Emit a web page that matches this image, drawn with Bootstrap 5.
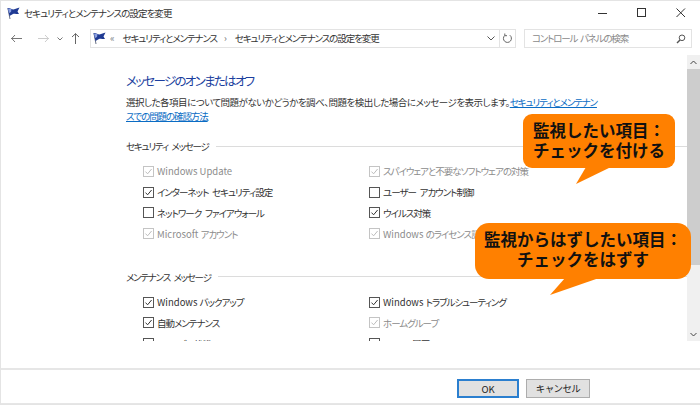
<!DOCTYPE html>
<html lang="ja">
<head>
<meta charset="utf-8">
<title>セキュリティとメンテナンスの設定を変更</title>
<link href="https://cdn.jsdelivr.net/npm/bootstrap@5.3.0/dist/css/bootstrap.min.css" rel="stylesheet">
<style>
html,body{height:100%;margin:0;overflow:hidden;background:#fff}
body{font-family:"Noto Sans CJK JP","Noto Sans",sans-serif;color:#333;font-size:9.5px;font-feature-settings:"palt"}
.win{height:405px;width:700px;border:1px solid #e4e4e4;border-right:0;position:relative}
.titlebar{height:24px;padding-left:5px;gap:4px;font-size:9.5px;letter-spacing:-.9px;color:#333}
.capbtns{margin-left:auto}
.capbtn{width:39px;height:24px}
.addr-row{height:22px;margin-top:3px;padding-right:7px}
.navbtns{width:89px;padding-left:10px}
.addrbox{width:426px;height:19px;border:1px solid #e3e3e3;font-size:9.5px;padding-left:1px;letter-spacing:-1.1px}
.addrbox .sep{margin:0 9px 0 7px;color:#666}
.refresh{width:16px;height:100%;border-left:1px solid #e3e3e3}
.searchbox{width:168px;height:19px;border:1px solid #e3e3e3;margin-left:8px;color:#8a8a8a;padding:0 5px 0 7px;letter-spacing:-1.2px;word-spacing:2px}
.pane{height:286px;margin-top:6px}
.scroller{flex:1 1 auto;overflow:hidden;padding:16px 0 0 125px;min-width:0}
.msg-head{font-size:12.5px;font-weight:400;color:#1c3f9e;margin:0;line-height:20px;letter-spacing:-1.7px}
.msg-body{font-size:9.5px;line-height:14px;margin:4px 0 0;white-space:nowrap;color:#333;letter-spacing:-.5px}
.msg-body a{color:#0a6cc4;text-decoration:underline;letter-spacing:-1.1px}
.sec-head{gap:7px;font-size:9.5px;line-height:14px;letter-spacing:-1.2px;word-spacing:2.5px}
.sec-head::after{content:"";flex:1 1 auto;height:1px;background:#dcdcdc}
.sec-one{margin-top:16px;margin-bottom:8px}
.sec-two{margin-top:26px;margin-bottom:8px}
.opt-grid{padding-left:17px;display:grid;grid-template-columns:226px 1fr;grid-auto-rows:20.7px}
.opt{gap:3px;font-size:9.5px;line-height:14px;white-space:nowrap;letter-spacing:-1px;word-spacing:2.5px}
.opt.off{color:#8c8c8c}
.lat{letter-spacing:0;word-spacing:0}
.box{width:11px;height:11px;flex:none}
.vbar{width:13px;background:#f0f0f0;flex:none}
.vbar .arrow{height:14px;background:#f0f0f0}
.thumb{height:196px;background:#cdcdcd}
.vfill{flex:1 1 auto}
.footer-gap{height:28px}
.footer{height:37px;border-top:2px solid #e6e6e6;border-bottom:1px solid #e6e6e6;padding:9px 110px 0 456px;gap:7px}
.dlgbtn{height:19px;font-size:9.5px;line-height:15px;padding:0;background:#e1e1e1;border:1px solid #adadad;border-radius:0;color:#222;letter-spacing:-.6px}
.dlgbtn.ok{width:62px;border:2px solid #2b7fcf;line-height:14px;letter-spacing:0}
.dlgbtn.cancel{width:64px}
.note{position:absolute;background:#ff8000;color:#111;font-weight:700;font-size:16.5px;line-height:19.5px;text-align:center;white-space:nowrap;font-feature-settings:normal}
.note-a{left:522px;top:113px;width:152px;height:54px;border-radius:9px;padding-top:7px}
.note-b{left:474px;top:222px;width:216px;height:56px;border-radius:14px;padding-top:7px}
.tail{position:absolute;display:block}
.tail-a{left:574px;top:166px}
.tail-b{left:548px;top:277px}
</style>
</head>
<body>
<svg width="0" height="0" class="position-absolute">
<defs>
<symbol id="flag" viewBox="0 0 14 13"><path d="M2 1.500 4 12" stroke="#6a7286" stroke-width="1" fill="none"/><path d="M1.500 1C4 .5 5.500 2.500 7.500 2.500L13.500 .5 11.500 4.500 13 7C10 7.500 9 6 7 7L3.500 9Z" fill="#1f3a93"/><path d="M2 1.500 5.500 2 5 5 3 6Z" fill="#8ba0e0"/></symbol>
<symbol id="tick" viewBox="0 0 11 11"><rect x=".5" y=".5" width="10" height="10" fill="#fff" stroke="#555"/><path d="M2.500 5.600 4.600 7.800 8.600 3" fill="none" stroke="#333"/></symbol>
<symbol id="empty" viewBox="0 0 11 11"><rect x=".5" y=".5" width="10" height="10" fill="#fff" stroke="#555"/></symbol>
<symbol id="dim" viewBox="0 0 11 11"><rect x=".5" y=".5" width="10" height="10" fill="#fff" stroke="#c4c4c4"/><path d="M2.500 5.600 4.600 7.800 8.600 3" fill="none" stroke="#bdbdbd"/></symbol>
</defs>
</svg>
<div class="win d-flex flex-column">
  <div class="titlebar d-flex align-items-center">
    <svg width="14" height="13"><use href="#flag"/></svg>
    <span>セキュリティとメンテナンスの設定を変更</span>
    <div class="capbtns d-flex">
      <div class="capbtn d-flex align-items-center justify-content-center"><svg width="10" height="10"><path d="M0 5.500H9" stroke="#333"/></svg></div>
      <div class="capbtn d-flex align-items-center justify-content-center"><svg width="10" height="10"><rect x=".5" y=".5" width="8" height="8" fill="none" stroke="#333"/></svg></div>
      <div class="capbtn d-flex align-items-center justify-content-center"><svg width="10" height="10"><path d="M.5.5 9 9M9 .5.5 9" stroke="#333"/></svg></div>
    </div>
  </div>
  <div class="addr-row d-flex align-items-center">
    <div class="navbtns d-flex align-items-center">
      <svg width="11" height="9"><path d="M0 4.500H11M4 1 .7 4.500 4 8" fill="none" stroke="#777"/></svg>
      <svg class="ms-3" width="11" height="9"><path d="M0 4.500H11M7 1 10.300 4.500 7 8" fill="none" stroke="#ccc"/></svg>
      <svg class="ms-2" width="6" height="4"><path d="M.5.5 3 3 5.500.5" fill="none" stroke="#777"/></svg>
      <svg class="ms-2" width="9" height="11"><path d="M4.500 11V.5M1 4 4.500.7 8 4" fill="none" stroke="#666"/></svg>
    </div>
    <div class="addrbox d-flex align-items-center">
      <svg width="14" height="13"><use href="#flag"/></svg>
      <span class="ms-1 text-secondary lat">«</span>
      <span class="ms-2">セキュリティとメンテナンス</span>
      <span class="sep">›</span>
      <span>セキュリティとメンテナンスの設定を変更</span>
      <svg class="ms-auto me-1" width="8" height="5"><path d="M.5.5 4 4 7.500.5" fill="none" stroke="#555"/></svg>
      <div class="refresh d-flex align-items-center justify-content-center"><svg width="11" height="11" viewBox="0 0 11 11"><path d="M7.800 2.200A4 4 0 1 1 2.700 2.500M2.800.5V2.700H5" fill="none" stroke="#666"/></svg></div>
    </div>
    <div class="searchbox d-flex align-items-center justify-content-between">
      <span>コントロール パネルの検索</span>
      <svg width="10" height="10" viewBox="0 0 10 10"><circle cx="6" cy="3.800" r="2.800" fill="none" stroke="#555"/><path d="M4 6 1 9" stroke="#555" stroke-width="1.400"/></svg>
    </div>
  </div>
  <div class="pane d-flex">
    <div class="scroller">
      <h1 class="msg-head">メッセージのオンまたはオフ</h1>
      <p class="msg-body">選択した各項目について問題がないかどうかを調べ、問題を検出した場合にメッセージを表示します。<a href="#">セキュリティとメンテナン<br>スでの問題の確認方法</a></p>
      <div class="sec-head sec-one d-flex align-items-center">セキュリティ メッセージ</div>
      <div class="opt-grid">
        <div class="opt off d-flex align-items-center"><svg class="box"><use href="#dim"/></svg><span class="lat">Windows Update</span></div>
        <div class="opt off d-flex align-items-center"><svg class="box"><use href="#dim"/></svg>スパイウェアと不要なソフトウェアの対策</div>
        <div class="opt d-flex align-items-center"><svg class="box"><use href="#tick"/></svg>インターネット セキュリティ設定</div>
        <div class="opt d-flex align-items-center"><svg class="box"><use href="#empty"/></svg>ユーザー アカウント制御</div>
        <div class="opt d-flex align-items-center"><svg class="box"><use href="#empty"/></svg>ネットワーク ファイアウォール</div>
        <div class="opt d-flex align-items-center"><svg class="box"><use href="#tick"/></svg>ウイルス対策</div>
        <div class="opt off d-flex align-items-center"><svg class="box"><use href="#dim"/></svg><span><span class="lat">Microsoft </span>アカウント</span></div>
        <div class="opt off d-flex align-items-center"><svg class="box"><use href="#dim"/></svg><span><span class="lat">Windows </span>のライセンス認証</span></div>
      </div>
      <div class="sec-head sec-two d-flex align-items-center">メンテナンス メッセージ</div>
      <div class="opt-grid">
        <div class="opt d-flex align-items-center"><svg class="box"><use href="#tick"/></svg><span><span class="lat">Windows </span>バックアップ</span></div>
        <div class="opt d-flex align-items-center"><svg class="box"><use href="#tick"/></svg><span><span class="lat">Windows </span>トラブルシューティング</span></div>
        <div class="opt d-flex align-items-center"><svg class="box"><use href="#tick"/></svg>自動メンテナンス</div>
        <div class="opt off d-flex align-items-center"><svg class="box"><use href="#dim"/></svg>ホームグループ</div>
        <div class="opt d-flex align-items-center"><svg class="box"><use href="#tick"/></svg>ドライブの状態</div>
        <div class="opt d-flex align-items-center"><svg class="box"><use href="#tick"/></svg>ファイル履歴</div>
      </div>
    </div>
    <div class="vbar d-flex flex-column">
      <div class="arrow d-flex align-items-center justify-content-center"><svg width="7" height="5"><path d="M.5 4 3.500 1 6.500 4" fill="none" stroke="#444"/></svg></div>
      <div class="thumb"></div>
      <div class="vfill"></div>
      <div class="arrow d-flex align-items-center justify-content-center"><svg width="7" height="5"><path d="M.5 1 3.500 4 6.500 1" fill="none" stroke="#444"/></svg></div>
    </div>
  </div>
  <div class="footer-gap"></div>
  <div class="footer d-flex">
    <button type="button" class="btn dlgbtn ok">OK</button>
    <button type="button" class="btn dlgbtn cancel">キャンセル</button>
  </div>
  <svg class="tail tail-a" width="36" height="18"><path d="M11 0H36L1 17Z" fill="#ff8000"/></svg>
  <div class="note note-a">監視したい項目：<br>チェックを付ける</div>
  <svg class="tail tail-b" width="50" height="18"><path d="M16 0H50L1 17Z" fill="#ff8000"/></svg>
  <div class="note note-b">監視からはずしたい項目：<br>チェックをはずす</div>
</div>
</body>
</html>
